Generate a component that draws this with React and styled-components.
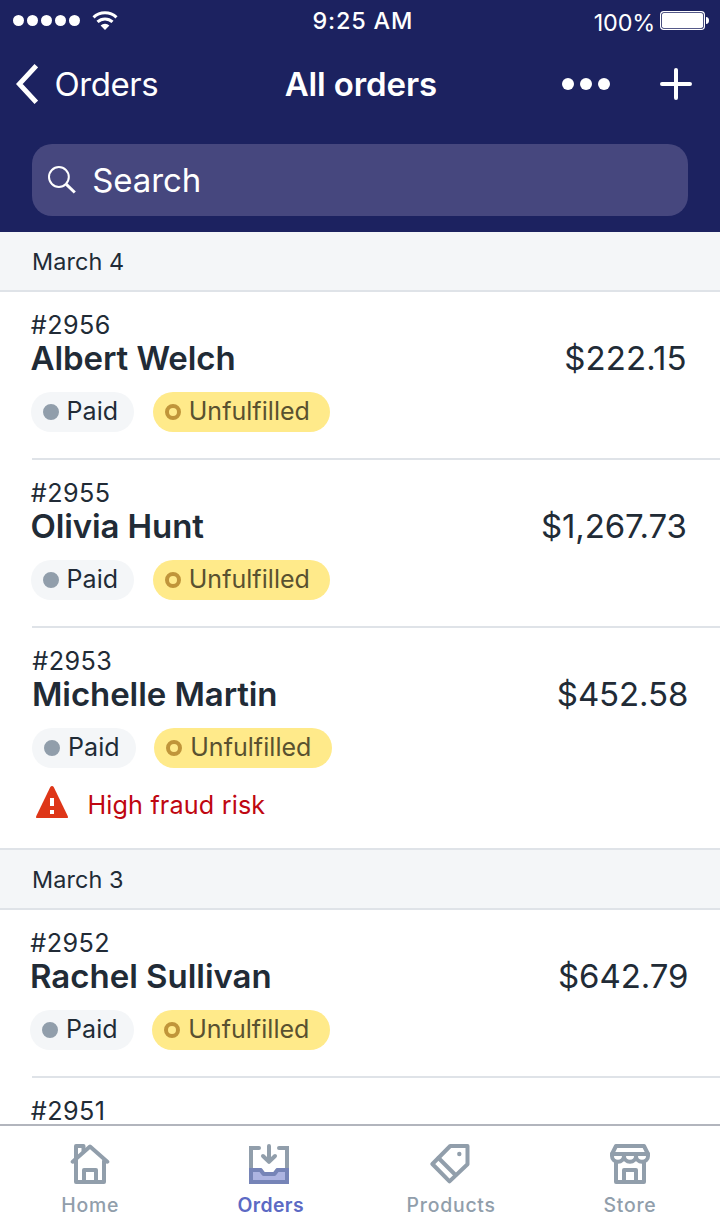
import React from "react";
import styled, { createGlobalStyle } from "styled-components";

const GlobalStyle = createGlobalStyle`
  *, *::before, *::after { box-sizing: border-box; }
  body {
    margin: 0;
    background: #fff;
    color: #212b36;
    font-family: Inter, "Liberation Sans", sans-serif;
  }
  svg { display: block; flex: none; }
`;

const Screen = styled.div`
  display: flex;
  flex-direction: column;
  width: 720px;
  height: 1224px;
  overflow: hidden;
  background: #fff;
`;

const Header = styled.header`
  flex: none;
  height: 232px;
  background: #1c2260;
  color: #fff;
`;

const StatusBar = styled.div`
  display: grid;
  grid-template-columns: 299.500px 1fr auto;
  height: 41px;
  padding: 0 11px 0 13px;
`;

const Signal = styled.div`
  display: flex;
  align-items: center;
  gap: 3px;
  svg { margin-left: 8.500px; }
`;

const SignalDot = styled.span`
  width: 11px;
  height: 11px;
  border-radius: 50%;
  background: #fff;
`;

const Clock = styled.time`
  font-size: 23.4px;
  font-weight: 500;
  line-height: 41px;
  letter-spacing: 0.82px;
`;

const Power = styled.div`
  display: flex;
  align-items: center;
  gap: 5px;
`;

const Percent = styled.span`
  padding-top: 4px;
  font-size: 23.4px;
  letter-spacing: -0.18px;
`;

const NavBar = styled.nav`
  display: grid;
  grid-template-columns: 268.700px 1fr auto;
  align-items: center;
  height: 86px;
  padding: 0 28px 0 16px;
`;

const Back = styled.a`
  display: flex;
  align-items: center;
  gap: 16.5px;
  font-size: 33px;
  letter-spacing: -0.44px;
`;

const Title = styled.h1`
  margin: 0;
  font-size: 33px;
  font-weight: 600;
  letter-spacing: -0.12px;
`;

const Actions = styled.div`
  display: flex;
  align-items: center;
  gap: 50px;
`;

const SearchField = styled.div`
  display: flex;
  align-items: center;
  gap: 16.200px;
  height: 72px;
  margin: 17px 32px 0;
  padding-left: 16px;
  border-radius: 20px;
  background: #46477e;
  font-size: 33px;
  letter-spacing: -0.1px;
`;

const List = styled.main`
  flex: 1;
  min-height: 0;
  overflow: hidden;
`;

const DayHeading = styled.h2`
  display: flex;
  align-items: center;
  height: ${(p) => (p.$ruled ? 62 : 60)}px;
  margin: 0;
  padding-left: 32px;
  border: solid #dfe3e8;
  border-width: ${(p) => (p.$ruled ? "2px 0" : "0 0 2px")};
  background: #f4f6f8;
  font-size: 23.4px;
  font-weight: 400;
  letter-spacing: 0.1px;
`;

const Order = styled.article`
  padding: 17px 0 0 ${(p) => p.$inset}px;
`;

const OrderNumber = styled.div`
  line-height: 32px;
  font-size: 25.2px;
  letter-spacing: 0.45px;
`;

const Summary = styled.div`
  display: flex;
  justify-content: space-between;
  height: 34px;
  padding-right: ${(p) => p.$end}px;
  line-height: 34px;
  font-size: 33px;
`;

const Customer = styled.strong`
  margin-left: -0.3px;
  font-weight: 600;
  letter-spacing: ${(p) => p.$tracking}px;
`;

const Total = styled.span`
  letter-spacing: ${(p) => p.$tracking}px;
`;

const Badges = styled.div`
  display: flex;
  gap: 18.4px;
  margin-top: 17px;
`;

const Badge = styled.span`
  display: flex;
  align-items: center;
  height: 40px;
  padding: 0 ${(p) => (p.$pending ? 20.4 : 16.3)}px 0 12px;
  border-radius: 20px;
  background: ${(p) => (p.$pending ? "#ffea8a" : "#f4f6f8")};
  color: ${(p) => (p.$pending ? "#595130" : "#212b36")};
  font-size: 25px;
  letter-spacing: 0.05px;

  &::before {
    content: "";
    width: 16px;
    height: 16px;
    margin-right: 7.8px;
    border: ${(p) => (p.$pending ? "4.5px solid #c0953a" : "8px solid #919eab")};
    border-radius: 50%;
  }
`;

const BadgeText = styled.span`
  height: 40px;
  line-height: 38px;
`;

const Alert = styled.div`
  display: flex;
  gap: 19.5px;
  height: 38px;
  margin-top: 18px;
  padding-left: 3.600px;
  line-height: 38px;
  color: #bf0711;
  font-size: 25.2px;
  letter-spacing: 0.15px;
`;

const Divider = styled.hr`
  height: 2px;
  margin: 26px 0 0 32px;
  border: 0;
  background: #dfe3e8;
`;

const Gap = styled.div`
  height: 24px;
`;

const TabBar = styled.footer`
  display: grid;
  grid-template-columns: repeat(4, 1fr);
  flex: none;
  height: 100px;
  border-top: 2px solid #b2b5bd;
  background: #fff;
`;

const Tab = styled.a`
  display: flex;
  flex-direction: column;
  align-items: center;
  gap: 9px;
  padding-top: 18px;
  color: ${(p) => (p.$active ? "#5c6ac4" : "#919eab")};
  svg { margin-left: ${(p) => (p.$active ? -2 : 0)}px; }
`;

const TabLabel = styled.span`
  padding-left: ${(p) => p.$nudge}px;
  font-size: 19.4px;
  font-weight: ${(p) => (p.$active ? 600 : 500)};
  line-height: 24px;
  letter-spacing: ${(p) => (p.$active ? 0.4 : 0.78)}px;
`;

const WifiIcon = () => (
  <svg width="26" height="20" viewBox="0 0 26 20" fill="none" stroke="#fff" strokeWidth="3">
    <path d="M1.500 6.400a16.600 16.600 0 0 1 23 0" />
    <path d="M5.500 10.900a11 11 0 0 1 15 0" />
    <path d="M13 19l-4.400-4.500a6.200 6.200 0 0 1 8.800 0z" fill="#fff" stroke="none" />
  </svg>
);

const BatteryIcon = () => (
  <svg width="49" height="19" viewBox="0 0 49 19" fill="#fff">
    <rect x="0.6" y="0.6" width="43.8" height="17.8" rx="3.2" fill="none" stroke="#fff" strokeWidth="1.2" />
    <rect x="2" y="2" width="41" height="15" rx="1.800" />
    <path d="M46 6c2 .2 3 1.4 3 3.5s-1 3.300-3 3.500z" />
  </svg>
);

const BackIcon = () => (
  <svg width="22" height="40" viewBox="0 0 22 40" fill="none" stroke="#fff" strokeWidth="4.9">
    <path d="M20.300 1.700L3.300 20l17 18.300" />
  </svg>
);

const MoreIcon = () => (
  <svg width="48" height="12" viewBox="0 0 48 12" fill="#fff">
    <circle cx="6" cy="6" r="6" />
    <circle cx="24" cy="6" r="6" />
    <circle cx="42" cy="6" r="6" />
  </svg>
);

const PlusIcon = () => (
  <svg width="32" height="32" viewBox="0 0 32 32" stroke="#fff" strokeWidth="4" strokeLinecap="round">
    <path d="M16 2v28M2 16h28" />
  </svg>
);

const SearchIcon = () => (
  <svg width="28" height="28" viewBox="0 0 28 28" fill="none" stroke="#fff">
    <circle cx="10.900" cy="11" r="9.900" strokeWidth="2" />
    <path d="M18.300 18.400l8.500 8.100" strokeWidth="3" />
  </svg>
);

const WarningIcon = () => (
  <svg width="32" height="32" viewBox="0 0 32 32">
    <path d="M14.300 1c.8-1.300 2.600-1.300 3.400 0l14 29c.6 1.400 0 3-1.500 3H1.800c-1.500 0-2.100-1.600-1.500-3z" fill="#de3618" />
    <path d="M14 12h4v8h-4zM14 24h4v4h-4z" fill="#fff" />
  </svg>
);

const TabSvg = ({ children }) => (
  <svg width="40" height="40" viewBox="0 0 40 40" fill="none" stroke="#919eab" strokeWidth="4" strokeLinecap="round" strokeLinejoin="round">
    {children}
  </svg>
);

const HomeIcon = () => (
  <TabSvg>
    <path d="M13.500 7V2H6v36h28V17" />
    <path d="M2.700 17.700L20 2.600l17.300 15.100" />
    <path d="M14 37V26h12v11" />
  </TabSvg>
);

const OrdersIcon = () => (
  <TabSvg>
    <path d="M10 4H2v34h36V4h-8" strokeLinejoin="miter" />
    <path d="M20 2v14M14 12l6 5.800 6-5.800" />
    <path d="M2 26h9.600l3 4h10.800l3-4H38" />
    <path d="M0 24h12.500l3 4h9l3-4H40v16H0z" fill="#5c6ac4" fillOpacity="0.5" stroke="none" />
  </TabSvg>
);

const ProductsIcon = () => (
  <TabSvg>
    <path d="M20.200 2H37.500v18.200L19.500 37.400 2.400 20z" />
    <path d="M8.500 14l17 17" />
    <circle cx="29.300" cy="10" r="2.200" fill="#919eab" stroke="none" />
  </TabSvg>
);

const StoreIcon = () => (
  <TabSvg>
    <path d="M2 10L6 2h28l4 8z" />
    <path d="M2 10v2a6 5.800 0 0 0 12 0 6 5.800 0 0 0 12 0 6 5.800 0 0 0 12 0V10" />
    <path d="M6 18v20h28V18" />
    <path d="M14 37V26h12v11" />
  </TabSvg>
);

const groups = [
  {
    day: "March 4",
    orders: [
      { number: "#2956", name: "Albert Welch", total: "$222.15", inset: 30.8, end: 33.3, tracking: -0.07, totalTracking: 0.1 },
      { number: "#2955", name: "Olivia Hunt", total: "$1,267.73", inset: 30.8, end: 33.2, tracking: -0.12, totalTracking: -0.1 },
      { number: "#2953", name: "Michelle Martin", total: "$452.58", inset: 32.3, end: 31.7, tracking: -0.08, totalTracking: -0.1, risk: "High fraud risk" },
    ],
  },
  {
    day: "March 3",
    orders: [
      { number: "#2952", name: "Rachel Sullivan", total: "$642.79", inset: 30.3, end: 31.6, tracking: -0.02, totalTracking: -0.08 },
      { number: "#2951", inset: 30.8 },
    ],
  },
];

const tabs = [
  { label: "Home", Icon: HomeIcon, nudge: 0.6 },
  { label: "Orders", Icon: OrdersIcon, nudge: 1.4, active: true },
  { label: "Products", Icon: ProductsIcon, nudge: 2.4 },
  { label: "Store", Icon: StoreIcon, nudge: 0 },
];

function OrderRow({ order, last }) {
  if (!order.name) {
    return (
      <Order $inset={order.inset}>
        <OrderNumber>{order.number}</OrderNumber>
      </Order>
    );
  }
  return (
    <>
      <Order $inset={order.inset}>
        <OrderNumber>{order.number}</OrderNumber>
        <Summary $end={order.end}>
          <Customer $tracking={order.tracking}>{order.name}</Customer>
          <Total $tracking={order.totalTracking}>{order.total}</Total>
        </Summary>
        <Badges>
          <Badge><BadgeText>Paid</BadgeText></Badge>
          <Badge $pending><BadgeText>Unfulfilled</BadgeText></Badge>
        </Badges>
        {order.risk && (
          <Alert>
            <WarningIcon />
            {order.risk}
          </Alert>
        )}
      </Order>
      {last ? <Gap /> : <Divider />}
    </>
  );
}

export default function App() {
  return (
    <>
      <GlobalStyle />
      <Screen>
        <Header>
          <StatusBar>
            <Signal>
              {[0, 1, 2, 3, 4].map((i) => <SignalDot key={i} />)}
              <WifiIcon />
            </Signal>
            <Clock>9:25 AM</Clock>
            <Power>
              <Percent>100%</Percent>
              <BatteryIcon />
            </Power>
          </StatusBar>
          <NavBar>
            <Back><BackIcon />Orders</Back>
            <Title>All orders</Title>
            <Actions>
              <MoreIcon />
              <PlusIcon />
            </Actions>
          </NavBar>
          <SearchField><SearchIcon />Search</SearchField>
        </Header>
        <List>
          {groups.map((group, g) => (
            <section key={group.day}>
              <DayHeading $ruled={g > 0}>{group.day}</DayHeading>
              {group.orders.map((order, i) => (
                <OrderRow key={order.number} order={order} last={i === group.orders.length - 1} />
              ))}
            </section>
          ))}
        </List>
        <TabBar>
          {tabs.map(({ label, Icon, nudge, active }) => (
            <Tab key={label} $active={active}>
              <Icon />
              <TabLabel $active={active} $nudge={nudge}>{label}</TabLabel>
            </Tab>
          ))}
        </TabBar>
      </Screen>
    </>
  );
}
